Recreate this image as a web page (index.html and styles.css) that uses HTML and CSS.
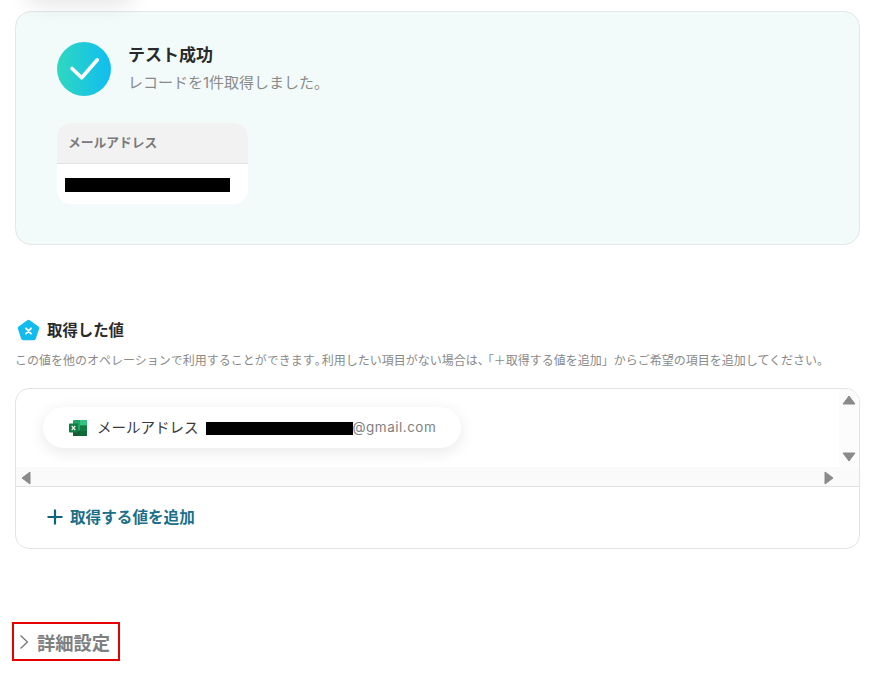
FILE: index.html
```html
<!DOCTYPE html>
<html lang="ja">
<head>
<meta charset="utf-8">
<title>テスト成功</title>
<link rel="stylesheet" href="styles.css">
</head>
<body>
<div class="top-shadow"></div>
<main class="page">
  <section class="success">
    <div class="success-head">
      <svg class="check" width="54" height="54" viewBox="0 0 54 54">
        <defs><linearGradient id="g" x1="0" x2="1" y1="0" y2="0"><stop offset="0" stop-color="#2fd8c0"/><stop offset="1" stop-color="#10bdf0"/></linearGradient></defs>
        <circle cx="27" cy="27" r="27" fill="url(#g)"/>
        <path d="M15 26.5 L24.7 35.8 L40.3 17.8" fill="none" stroke="#fff" stroke-width="3.6" stroke-linecap="round" stroke-linejoin="round"/>
      </svg>
      <div class="success-text">
        <div class="success-title">テスト成功</div>
        <div class="success-sub">レコードを1件取得しました。</div>
      </div>
    </div>
    <div class="record">
      <div class="record-head">メールアドレス</div>
      <div class="record-body"><span class="redact redact-record"></span></div>
    </div>
  </section>

  <section class="values">
    <h2 class="values-title">
      <svg width="23" height="23" viewBox="0 0 23 23">
        <path d="M10.3 1.2 Q11.5 .4 12.7 1.2 L21.4 7.4 Q22.6 8.3 22.2 9.6 L18.9 19.6 Q18.4 21.2 16.8 21.2 L6.2 21.2 Q4.6 21.2 4.1 19.6 L.8 9.6 Q.4 8.3 1.6 7.4 Z" fill="#12bbee"/>
        <path d="M9 9.3 L14 14.7 M14 9.3 L9 14.7" stroke="#fff" stroke-width="1.8" stroke-linecap="round"/>
      </svg>
      <span>取得した値</span>
    </h2>
    <p class="values-desc">この値を他のオペレーションで利用することができます<span class="trim-wide">。</span>利用したい項目がない場合は<span class="trim-narrow">、</span>「＋取得する値を追加」からご希望の項目を追加してください。</p>
    <div class="box">
      <div class="scroller">
        <div class="pill">
          <svg width="18" height="18" viewBox="0 0 18 18">
            <rect x="4" y="1" width="14" height="16" rx="1" fill="#21a366"/>
            <rect x="11" y="1" width="7" height="5.4" fill="#33c481"/>
            <rect x="4" y="11.6" width="7" height="5.4" fill="#185c37"/>
            <rect x="11" y="6.4" width="7" height="5.2" fill="#107c41"/>
            <rect x="11" y="11.6" width="7" height="5.4" fill="#0f6a38"/>
            <rect x="0" y="4.5" width="9" height="9" rx="1" fill="#107c41"/>
            <path d="M2.7 6.8 L6.3 11.2 M6.3 6.8 L2.7 11.2" stroke="#fff" stroke-width="1.1"/>
          </svg>
          <span class="pill-label">メールアドレス</span>
          <span class="redact redact-pill"></span><span class="pill-value">@gmail.com</span>
        </div>
        <div class="vbar">
          <svg width="14" height="10" viewBox="0 0 14 10"><path d="M7 1 L13 9 H1 Z" fill="#8a8a8a" stroke="#8a8a8a" stroke-linejoin="round"/></svg>
          <svg width="14" height="10" viewBox="0 0 14 10"><path d="M7 9 L13 1 H1 Z" fill="#8a8a8a" stroke="#8a8a8a" stroke-linejoin="round"/></svg>
        </div>
        <div class="hbar">
          <svg width="10" height="14" viewBox="0 0 10 14"><path d="M1 7 L9 1 V13 Z" fill="#8a8a8a" stroke="#8a8a8a" stroke-linejoin="round"/></svg>
          <svg width="10" height="14" viewBox="0 0 10 14"><path d="M9 7 L1 1 V13 Z" fill="#8a8a8a" stroke="#8a8a8a" stroke-linejoin="round"/></svg>
        </div>
      </div>
      <div class="add">
        <svg width="16" height="16" viewBox="0 0 16 16"><path d="M8 .5 V15.5 M.5 8 H15.5" stroke="#0e6479" stroke-width="2.2"/></svg>
        <span class="add-label">取得する値を追加</span>
      </div>
    </div>
  </section>

  <div class="detail">
    <svg width="10" height="16" viewBox="0 0 10 16"><path d="M1.5 1.5 L8.5 8 L1.5 14.5" fill="none" stroke="#777" stroke-width="1.3"/></svg>
    <span>詳細設定</span>
  </div>
</main>
</body>
</html>
```
FILE: styles.css
```css
* { box-sizing: border-box; }
html, body { margin: 0; padding: 0; }
body {
  background: #fff;
  font-family: Inter, "Noto Sans CJK JP", "Noto Sans", sans-serif;
  color: #2a2a2a;
  height: 694px;
  overflow: hidden;
  position: relative;
}
.top-shadow {
  position: absolute;
  left: 30px;
  top: -30px;
  width: 100px;
  height: 30px;
  box-shadow: 0 0 20px 7px rgba(0, 0, 0, .09);
  border-radius: 16px;
}
.page { padding: 11px 20px 0 15px; display: flex; flex-direction: column; }

.success {
  height: 234px;
  background: #f2fbfa;
  border: 1px solid #e2e7e7;
  border-radius: 16px;
  padding: 30px 41px;
}
.success-head { display: flex; gap: 17px; align-items: flex-start; }
.check { display: block; flex: none; }
.success-text { padding-top: 2px; }
.success-title { font-size: 17px; font-weight: 700; line-height: 22px; color: #2a2a2a; }
.success-sub { font-size: 15px; line-height: 20px; margin-top: 7px; color: #8a8a8a; }
.record {
  width: 191px;
  margin-top: 27px;
  border-radius: 14px;
  background: #fff;
  overflow: hidden;
}
.record-head {
  height: 41px;
  background: #f2f2f2;
  border-bottom: 1px solid #e3e3e3;
  padding: 0 11px;
  font-size: 12.75px;
  font-weight: 700;
  line-height: 39px;
  color: #7a7a7a;
}
.record-body { height: 40px; padding: 14px 8px 0; }
.redact { display: block; background: #000; }
.redact-record { width: 165px; height: 14px; }

.values { margin-top: 74px; }
.values-title {
  margin: 0;
  display: flex;
  align-items: center;
  gap: 7px;
  font-size: 15.4px;
  font-weight: 700;
  line-height: 24px;
  color: #2a2a2a;
  padding-left: 2px;
}
.values-title svg { display: block; flex: none; margin-top: -2px; }
.values-desc {
  margin: 9px 0 0;
  font-size: 12px;
  line-height: 18px;
  color: #8a8a8a;
  white-space: nowrap;
}
.trim-wide { letter-spacing: -5px; }
.trim-narrow { letter-spacing: -2px; }
.box {
  margin-top: 18px;
  height: 161px;
  border: 1px solid #e3e3e3;
  border-radius: 14px;
  display: flex;
  flex-direction: column;
  overflow: hidden;
}
.scroller {
  position: relative;
  height: 98px;
  border-bottom: 1px solid #e3e3e3;
  padding: 18px 0 0 27px;
}
.pill {
  width: 418px;
  height: 41px;
  border-radius: 21px;
  background: #fff;
  box-shadow: 0 4px 16px rgba(0, 0, 0, .09);
  display: flex;
  align-items: center;
  padding-left: 26px;
  position: relative;
  z-index: 1;
}
.pill svg { display: block; flex: none; }
.pill-label { font-size: 14.5px; margin-left: 10px; margin-top: -2px; color: #3a3a3a; }
.redact-pill { width: 147px; height: 13px; margin-left: 7px; margin-top: 1px; }
.pill-value { font-size: 13.5px; letter-spacing: .5px; color: #7f7f7f; margin-top: -1px; }
.vbar {
  position: absolute;
  right: 0;
  top: 0;
  bottom: 19px;
  width: 20px;
  background: #fcfcfc;
  display: flex;
  flex-direction: column;
  justify-content: space-between;
  align-items: center;
  padding: 6px 0 5px;
}
.hbar {
  position: absolute;
  left: 0;
  right: 0;
  bottom: 0;
  height: 19px;
  background: #fafafa;
  display: flex;
  justify-content: space-between;
  align-items: center;
  padding: 2px 25px 0 5px;
}
.hbar svg, .vbar svg { display: block; }
.add {
  flex: 1;
  display: flex;
  align-items: center;
  gap: 7px;
  padding: 0 0 2px 31px;
  font-size: 15.6px;
  font-weight: 700;
  color: #1c6f88;
}
.add svg { display: block; flex: none; }
.add-label { margin-top: -1px; }

.detail {
  margin-top: 73px;
  margin-left: -3px;
  width: 108px;
  height: 39px;
  border: 2px solid #e60000;
  display: flex;
  align-items: center;
  gap: 8px;
  padding-left: 5px;
  font-size: 18.3px;
  font-weight: 700;
  color: #7f7f7f;
}
.detail svg { display: block; flex: none; }
```
